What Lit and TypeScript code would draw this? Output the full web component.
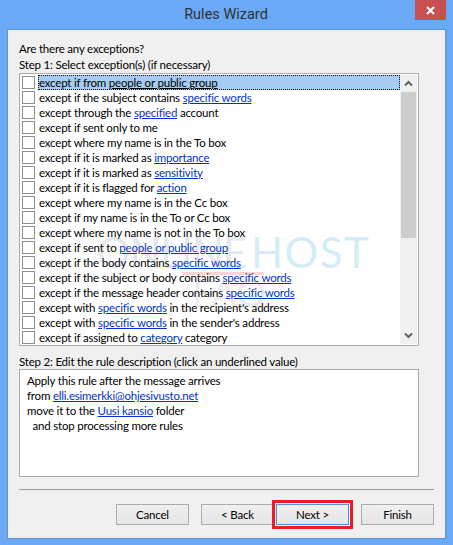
import { LitElement, html, css } from 'lit';
import { customElement } from 'lit/decorators.js';

type Part = string | { link: string };

const rows: Part[][] = [
  ['except if from ', { link: 'people or public group' }],
  ['except if the subject contains ', { link: 'specific words' }],
  ['except through the ', { link: 'specified' }, ' account'],
  ['except if sent only to me'],
  ['except where my name is in the To box'],
  ['except if it is marked as ', { link: 'importance' }],
  ['except if it is marked as ', { link: 'sensitivity' }],
  ['except if it is flagged for ', { link: 'action' }],
  ['except where my name is in the Cc box'],
  ['except if my name is in the To or Cc box'],
  ['except where my name is not in the To box'],
  ['except if sent to ', { link: 'people or public group' }],
  ['except if the body contains ', { link: 'specific words' }],
  ['except if the subject or body contains ', { link: 'specific words' }],
  ['except if the message header contains ', { link: 'specific words' }],
  ['except with ', { link: 'specific words' }, " in the recipient's address"],
  ['except with ', { link: 'specific words' }, " in the sender's address"],
  ['except if assigned to ', { link: 'category' }, ' category'],
];

const parts = (r: Part[]) =>
  r.map((p) => (typeof p === 'string' ? p : html`<a>${p.link}</a>`));

@customElement('app-root')
export class AppRoot extends LitElement {
  static styles = css`
    :host {
      display: block;
      width: 453px;
      height: 545px;
      background: #69a9f5;
      font-family: Lato, 'Noto Sans', sans-serif;
      font-size: 11.5px;
      letter-spacing: -0.2px;
      color: #000;
      position: relative;
      overflow: hidden;
    }
    .title {
      height: 29px;
      display: flex;
      align-items: center;
      justify-content: center;
      font-family: Roboto, sans-serif;
      font-size: 14.5px;
      letter-spacing: 0;
      color: #333;
      padding-right: 1px;
    }
    .close {
      position: absolute;
      top: 0;
      right: 7px;
      width: 31px;
      height: 20px;
      background: #c75050;
      display: flex;
      align-items: center;
      justify-content: center;
    }
    .window {
      box-sizing: border-box;
      margin-left: 7px;
      width: 439px;
      height: 510px;
      background: #f0f0f0;
      border: 1px solid #5c94d6;
      padding: 11px 11px 0 11px;
      display: flex;
      flex-direction: column;
    }
    .label {
      height: 16px;
      line-height: 16px;
      white-space: nowrap;
    }
    .list {
      box-sizing: border-box;
      width: 400px;
      height: 273px;
      border: 1px solid #acacac;
      background: #fff;
      display: flex;
      padding: 1px;
    }
    .rows {
      flex: 1;
      min-width: 0;
    }
    .row {
      height: 15px;
      display: flex;
      align-items: center;
      white-space: nowrap;
    }
    .box {
      box-sizing: border-box;
      width: 13px;
      height: 13px;
      margin-left: 1px;
      margin-right: 3px;
      border: 1px solid #8e8f8f;
      background: #fff;
      flex: none;
    }
    .text {
      flex: 1;
      height: 15px;
      line-height: 15px;
      padding-left: 1px;
    }
    .row.sel .text {
      background: #a6cdf1;
      outline: 1px dotted #111;
      outline-offset: -1px;
    }
    a {
      color: #0033cc;
      text-decoration: underline;
    }
    .row.sel a {
      color: #000;
    }
    .bar {
      width: 17px;
      flex: none;
      background: #f0f0f0;
      display: flex;
      flex-direction: column;
      align-items: center;
    }
    .arrow {
      height: 17px;
      display: flex;
      align-items: center;
      justify-content: center;
      flex: none;
    }
    .thumb {
      width: 15px;
      height: 146px;
      background: #cdcdcd;
    }
    .fill {
      flex: 1;
    }
    .step2 {
      margin-top: 8px;
      height: 15px;
    }
    .desc {
      box-sizing: border-box;
      width: 400px;
      height: 108px;
      border: 1px solid #acacac;
      background: #fff;
      padding: 3px 7px;
      line-height: 15px;
    }
    .desc div {
      white-space: pre;
    }
    .sep {
      height: 1px;
      background: #a0a0a0;
      margin-top: 12px;
      width: 415px;
    }
    .buttons {
      display: flex;
      margin-top: 14px;
      padding-left: 97px;
    }
    button {
      box-sizing: border-box;
      width: 73px;
      height: 21px;
      padding: 0;
      border: 1px solid #acacac;
      background: linear-gradient(#f0f0f0, #e5e5e5);
      font: inherit;
      letter-spacing: inherit;
      color: #000;
    }
    .back {
      margin-left: 12px;
    }
    .next {
      margin-left: 2px;
      border-color: #3c9ae8;
      position: relative;
    }
    .next::after {
      content: '';
      position: absolute;
      left: -5px;
      top: -5px;
      right: -5px;
      bottom: -5px;
      border: 3px solid #ed1c24;
    }
    .finish {
      margin-left: 12px;
    }
    .mark {
      position: absolute;
      left: 150px;
      top: 233px;
      width: 230px;
      font-family: Lato, sans-serif;
      pointer-events: none;
      white-space: nowrap;
    }
    .brand {
      display: flex;
      font-size: 42px;
      line-height: 39px;
      letter-spacing: -1px;
    }
    .online {
      width: 96px;
      flex: none;
      display: flex;
      justify-content: flex-end;
      color: rgba(90, 110, 140, 0.18);
    }
    .host {
      margin-left: 5px;
      letter-spacing: 1.5px;
      color: rgba(120, 195, 230, 0.32);
    }
    .redline {
      width: 82px;
      height: 3px;
      margin-left: 32px;
      background: rgba(237, 60, 70, 0.22);
    }
    .faq {
      margin-left: 42px;
      font-size: 38px;
      line-height: 34px;
      color: rgba(90, 110, 140, 0.14);
    }
  `;

  render() {
    return html`
      <div class="title">Rules Wizard</div>
      <div class="close">
        <svg width="9" height="9" viewBox="0 0 9 9">
          <path d="M1 1 L8 8 M8 1 L1 8" stroke="#fff" stroke-width="2" fill="none" />
        </svg>
      </div>
      <div class="window">
        <div class="label">Are there any exceptions?</div>
        <div class="label">Step 1: Select exception(s) (if necessary)</div>
        <div class="list">
          <div class="rows">
            ${rows.map(
              (r, i) => html`<div class="row ${i === 0 ? 'sel' : ''}">
                <span class="box"></span><span class="text">${parts(r)}</span>
              </div>`
            )}
          </div>
          <div class="bar">
            <div class="arrow">
              <svg width="9" height="7" viewBox="0 0 9 7">
                <path d="M1 5.5 L4.5 2 L8 5.5" stroke="#606060" stroke-width="2" fill="none" />
              </svg>
            </div>
            <div class="thumb"></div>
            <div class="fill"></div>
            <div class="arrow">
              <svg width="9" height="7" viewBox="0 0 9 7">
                <path d="M1 1.5 L4.5 5 L8 1.5" stroke="#606060" stroke-width="2" fill="none" />
              </svg>
            </div>
          </div>
        </div>
        <div class="label step2">Step 2: Edit the rule description (click an underlined value)</div>
        <div class="desc">
          <div>Apply this rule after the message arrives</div>
          <div>from <a>elli.esimerkki@ohjesivusto.net</a></div>
          <div>move it to the <a>Uusi kansio</a> folder</div>
          <div>  and stop processing more rules</div>
        </div>
        <div class="sep"></div>
        <div class="buttons">
          <button>Cancel</button>
          <button class="back">&lt; Back</button>
          <button class="next">Next &gt;</button>
          <button class="finish">Finish</button>
        </div>
      </div>
      <div class="mark">
        <div class="brand"><span class="online">ONLINE</span><span class="host">HOST</span></div>
        <div class="redline"></div>
        <div class="faq">FAQ</div>
      </div>
    `;
  }
}
